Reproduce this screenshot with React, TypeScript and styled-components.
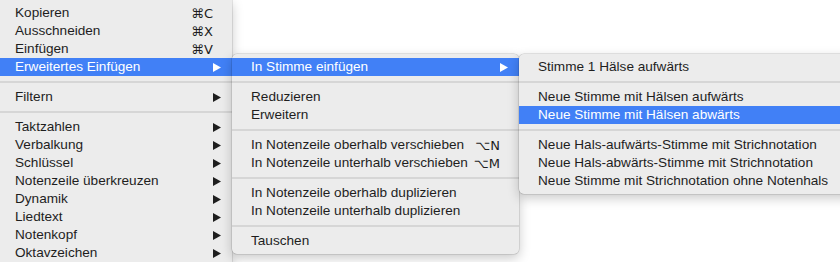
import React from "react";
import styled, { createGlobalStyle } from "styled-components";

type Entry =
  | { kind: "sep" }
  | { kind: "item"; label: string; shortcut?: string; sub?: boolean; active?: boolean; open?: Entry[]; openWidth?: number };

const GlobalStyle = createGlobalStyle`
  html, body {
    margin: 0;
    padding: 0;
    width: 840px;
    height: 262px;
    overflow: hidden;
    background: #fff;
  }
  body {
    font-family: "Liberation Sans", Arial, sans-serif;
    font-size: 13.6px;
    color: #1e1e1e;
    -webkit-font-smoothing: antialiased;
  }
`;

const Page = styled.div`
  position: relative;
  width: 840px;
  height: 262px;
  overflow: hidden;
`;

const Menu = styled.div<{ $width: number; $top?: boolean }>`
  width: ${({ $width }) => $width}px;
  padding: 4px 0;
  background: #ececec;
  border-radius: ${({ $top }) => ($top ? "0 0 5px 5px" : "5px")};
  box-shadow: 0 0 0 0.5px rgba(0, 0, 0, 0.18), 0 4px 12px rgba(0, 0, 0, 0.22);
`;

const Row = styled.div<{ $active?: boolean; $pad: number }>`
  position: relative;
  display: flex;
  align-items: center;
  height: 18px;
  padding: 0 11px 0 ${({ $pad }) => $pad}px;
  background: ${({ $active }) => ($active ? "#4180f6" : "transparent")};
  color: ${({ $active }) => ($active ? "#fff" : "#1e1e1e")};
  white-space: nowrap;
`;

const Label = styled.span`
  flex: 1;
  line-height: 18px;
`;

const Shortcut = styled.span`
  flex: none;
  margin-left: 4px;
  padding-right: 8px;
  font-family: "DejaVu Sans", "Liberation Sans", sans-serif;
  font-size: 13px;
`;

const Arrow = styled.svg`
  width: 8px;
  height: 9px;
  flex: none;
`;

const Separator = styled.div`
  height: 12px;
  display: flex;
  align-items: center;
  &::after {
    content: "";
    flex: 1;
    height: 2px;
    background: #d6d6d6;
  }
`;

const Flyout = styled.div`
  position: absolute;
  left: 100%;
  top: -4px;
  z-index: 2;
  color: #1e1e1e;
`;

const stimmeItems: Entry[] = [
  { kind: "item", label: "Stimme 1 Hälse aufwärts" },
  { kind: "sep" },
  { kind: "item", label: "Neue Stimme mit Hälsen aufwärts" },
  { kind: "item", label: "Neue Stimme mit Hälsen abwärts", active: true },
  { kind: "sep" },
  { kind: "item", label: "Neue Hals-aufwärts-Stimme mit Strichnotation" },
  { kind: "item", label: "Neue Hals-abwärts-Stimme mit Strichnotation" },
  { kind: "item", label: "Neue Stimme mit Strichnotation ohne Notenhals" },
];

const pasteItems: Entry[] = [
  { kind: "item", label: "In Stimme einfügen", sub: true, active: true, open: stimmeItems, openWidth: 340 },
  { kind: "sep" },
  { kind: "item", label: "Reduzieren" },
  { kind: "item", label: "Erweitern" },
  { kind: "sep" },
  { kind: "item", label: "In Notenzeile oberhalb verschieben", shortcut: "⌥N" },
  { kind: "item", label: "In Notenzeile unterhalb verschieben", shortcut: "⌥M" },
  { kind: "sep" },
  { kind: "item", label: "In Notenzeile oberhalb duplizieren" },
  { kind: "item", label: "In Notenzeile unterhalb duplizieren" },
  { kind: "sep" },
  { kind: "item", label: "Tauschen" },
];

const mainItems: Entry[] = [
  { kind: "item", label: "Kopieren", shortcut: "⌘C" },
  { kind: "item", label: "Ausschneiden", shortcut: "⌘X" },
  { kind: "item", label: "Einfügen", shortcut: "⌘V" },
  { kind: "item", label: "Erweitertes Einfügen", sub: true, active: true, open: pasteItems, openWidth: 287 },
  { kind: "sep" },
  { kind: "item", label: "Filtern", sub: true },
  { kind: "sep" },
  { kind: "item", label: "Taktzahlen", sub: true },
  { kind: "item", label: "Verbalkung", sub: true },
  { kind: "item", label: "Schlüssel", sub: true },
  { kind: "item", label: "Notenzeile überkreuzen", sub: true },
  { kind: "item", label: "Dynamik", sub: true },
  { kind: "item", label: "Liedtext", sub: true },
  { kind: "item", label: "Notenkopf", sub: true },
  { kind: "item", label: "Oktavzeichen", sub: true },
];

const SubArrow: React.FC<{ color: string }> = ({ color }) => (
  <Arrow viewBox="0 0 8 9">
    <polygon points="0,0 8,4.5 0,9" fill={color} />
  </Arrow>
);

const MenuList: React.FC<{ items: Entry[]; width: number; pad: number; top?: boolean }> = ({ items, width, pad, top }) => (
  <Menu $width={width} $top={top}>
    {items.map((entry, i) => {
      if (entry.kind === "sep") return <Separator key={i} />;
      return (
        <Row key={i} $active={entry.active} $pad={pad}>
          <Label>{entry.label}</Label>
          {entry.shortcut && <Shortcut>{entry.shortcut}</Shortcut>}
          {entry.sub && <SubArrow color={entry.active ? "#fff" : "#1e1e1e"} />}
          {entry.open && (
            <Flyout>
              <MenuList items={entry.open} width={entry.openWidth ?? 280} pad={19} />
            </Flyout>
          )}
        </Row>
      );
    })}
  </Menu>
);

const App: React.FC = () => (
  <Page>
    <GlobalStyle />
    <MenuList items={mainItems} width={232} pad={15} top />
  </Page>
);

export default App;
